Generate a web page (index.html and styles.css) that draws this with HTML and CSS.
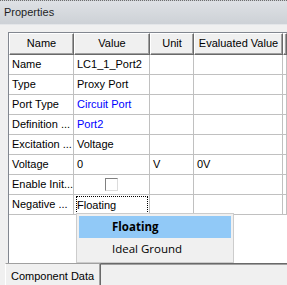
FILE: index.html
```html
<!DOCTYPE html>
<html lang="en">
<head>
    <meta charset="UTF-8">
    <title>Properties</title>
    <link rel="stylesheet" href="styles.css">
</head>
<body>

    <div class="titlebar">Properties</div>

    <div class="panel">
        <div class="frame">
            <div class="grid">
                <div class="head">Name</div>
                <div class="head">Value</div>
                <div class="head">Unit</div>
                <div class="head">Evaluated Value</div>
                <div class="head"></div>

                <div class="cell">Name</div>
                <div class="cell">LC1_1_Port2</div>
                <div class="cell"></div>
                <div class="cell"></div>
                <div class="cell"></div>

                <div class="cell">Type</div>
                <div class="cell">Proxy Port</div>
                <div class="cell"></div>
                <div class="cell"></div>
                <div class="cell"></div>

                <div class="cell">Port Type</div>
                <div class="cell blue">Circuit Port</div>
                <div class="cell"></div>
                <div class="cell"></div>
                <div class="cell"></div>

                <div class="cell">Definition ...</div>
                <div class="cell blue">Port2</div>
                <div class="cell"></div>
                <div class="cell"></div>
                <div class="cell"></div>

                <div class="cell">Excitation ...</div>
                <div class="cell">Voltage</div>
                <div class="cell"></div>
                <div class="cell"></div>
                <div class="cell"></div>

                <div class="cell">Voltage</div>
                <div class="cell">0</div>
                <div class="cell">V</div>
                <div class="cell">0V</div>
                <div class="cell"></div>

                <div class="cell">Enable Init...</div>
                <div class="cell center"><span class="checkbox"></span></div>
                <div class="cell"></div>
                <div class="cell"></div>
                <div class="cell"></div>

                <div class="cell">Negative ...</div>
                <div class="cell"><span class="focus">Floating</span></div>
                <div class="cell"></div>
                <div class="cell"></div>
                <div class="cell"></div>
            </div>

            <div class="dropdown">
                <div class="option selected">Floating</div>
                <div class="option">Ideal Ground</div>
            </div>
        </div>

        <div class="tabs">
            <div class="tab">Component Data</div>
            <div class="tabfill"></div>
        </div>
    </div>

</body>
</html>
```

FILE: styles.css
```css
body {
    margin: 0;
    font-family: "Liberation Sans", Arial, sans-serif;
    font-size: 11px;
    color: #000;
    background-color: #f0f0f0;
    width: 287px;
    height: 285px;
    overflow: hidden;
}
.titlebar {
    height: 23px;
    line-height: 22px;
    padding-left: 4px;
    border-top: 1px dotted #6e6e6e;
    background: linear-gradient(#dee1e5, #cdd1d6);
    border-bottom: 1px solid #e4e6e9;
    color: #1e1e1e;
}
.panel {
    padding-top: 7px;
}
.frame {
    position: relative;
    margin-left: 8px;
    height: 230px;
    background: white;
    border-left: 1px solid #828790;
    border-top: 1px solid #828790;
    overflow: hidden;
}
.grid {
    display: grid;
    grid-template-columns: 65px 76px 44px 89px 4px;
    grid-template-rows: 22px;
    grid-auto-rows: 20px;
}
.head {
    box-sizing: border-box;
    background: #f0f0f0;
    border-top: 1px solid #fff;
    border-left: 1px solid #fff;
    border-right: 1px solid #696969;
    border-bottom: 1px solid #696969;
    box-shadow: inset -1px -1px 0 #a0a0a0;
    text-align: center;
    line-height: 19px;
    white-space: nowrap;
    overflow: hidden;
}
.cell {
    box-sizing: border-box;
    border-right: 1px solid #c0c0c0;
    border-bottom: 1px solid #c0c0c0;
    padding-left: 3px;
    line-height: 19px;
    white-space: nowrap;
    overflow: hidden;
}
.blue {
    color: #0000ff;
}
.center {
    display: flex;
    justify-content: center;
    align-items: center;
    padding-left: 0;
}
.checkbox {
    width: 11px;
    height: 11px;
    background: white;
    border-top: 1px solid #808080;
    border-left: 1px solid #808080;
    border-right: 1px solid #dcdcdc;
    border-bottom: 1px solid #dcdcdc;
    margin-right: 1px;
}
.focus {
    display: block;
    margin: 1px 1px 0 -1px;
    height: 16px;
    line-height: 16px;
    border: 1px dotted #000;
}
.dropdown {
    position: absolute;
    left: 67px;
    top: 180px;
    width: 152px;
    padding: 2px;
    background: #f0f0f0;
    border: 1px solid #cccccc;
}
.option {
    height: 22px;
    line-height: 22px;
    padding-left: 33px;
    font-family: "Open Sans", "Liberation Sans", sans-serif;
    font-size: 11.5px;
}
.option.selected {
    background: #91c9f7;
    font-weight: bold;
}
.tabs {
    display: flex;
    height: 23px;
}
.tab {
    margin-left: 5px;
    width: 89px;
    padding: 2px 0 0 5px;
    line-height: 21px;
    border-left: 1px solid #ffffff;
    border-right: 1px solid #696969;
    box-shadow: inset -1px 0 0 #a0a0a0;
    border-top: 1px solid #a0a0a0;
}
.tabfill {
    flex: 1;
    border-top: 1px solid #696969;
    box-shadow: inset 0 1px 0 #a0a0a0;
}
```
